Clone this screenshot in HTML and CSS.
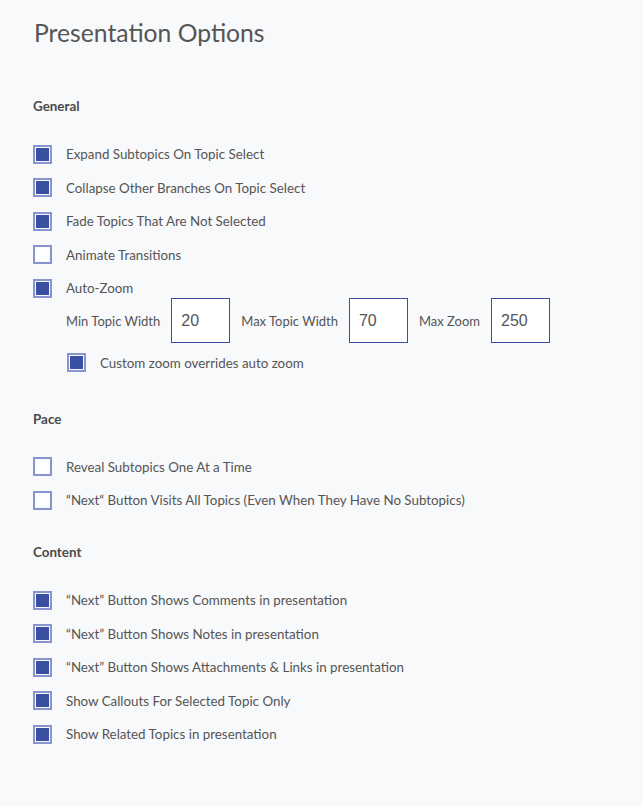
FILE: index.html
```html
<!DOCTYPE html>
<html lang="en">
<head>
    <meta charset="UTF-8">
    <meta name="viewport" content="width=device-width, initial-scale=1.0">
    <title>Presentation Options</title>
    <link rel="stylesheet" href="styles.css">
</head>
<body>
    <div class="page">
        <h1>Presentation Options</h1>

        <div class="section section-general">
            <h4>General</h4>
            <div class="options">
                <label class="option"><input type="checkbox" checked><span>Expand Subtopics On Topic Select</span></label>
                <label class="option"><input type="checkbox" checked><span>Collapse Other Branches On Topic Select</span></label>
                <label class="option"><input type="checkbox" checked><span>Fade Topics That Are Not Selected</span></label>
                <label class="option"><input type="checkbox"><span>Animate Transitions</span></label>
                <div class="option-group">
                    <label class="option"><input type="checkbox" checked><span>Auto-Zoom</span></label>
                    <div class="zoom-settings">
                        <span>Min Topic Width</span>
                        <input type="text" class="num" value="20">
                        <span>Max Topic Width</span>
                        <input type="text" class="num" value="70">
                        <span>Max Zoom</span>
                        <input type="text" class="num" value="250">
                    </div>
                    <label class="option sub"><input type="checkbox" checked><span>Custom zoom overrides auto zoom</span></label>
                </div>
            </div>
        </div>

        <div class="section section-pace">
            <h4>Pace</h4>
            <div class="options">
                <label class="option"><input type="checkbox"><span>Reveal Subtopics One At a Time</span></label>
                <label class="option"><input type="checkbox"><span>“Next“ Button Visits All Topics (Even When They Have No Subtopics)</span></label>
            </div>
        </div>

        <div class="section">
            <h4>Content</h4>
            <div class="options">
                <label class="option"><input type="checkbox" checked><span>“Next” Button Shows Comments in presentation</span></label>
                <label class="option"><input type="checkbox" checked><span>“Next” Button Shows Notes in presentation</span></label>
                <label class="option"><input type="checkbox" checked><span>“Next” Button Shows Attachments &amp; Links in presentation</span></label>
                <label class="option"><input type="checkbox" checked><span>Show Callouts For Selected Topic Only</span></label>
                <label class="option"><input type="checkbox" checked><span>Show Related Topics in presentation</span></label>
            </div>
        </div>
    </div>
</body>
</html>
```

FILE: styles.css
```css
html, body {
    margin: 0;
    padding: 0;
    background-color: #f8f9fb;
}
body {
    font-family: Lato, "Open Sans", sans-serif;
    color: #555;
    font-size: 13px;
}
.page {
    padding: 18px 33px 40px 33px;
}
h1 {
    font-size: 24.7px;
    font-weight: 400;
    line-height: 30px;
    margin: 0 0 0 1px;
    color: #555;
}
h4 {
    font-size: 13.4px;
    font-weight: 700;
    line-height: 20px;
    margin: 0 0 28.5px 0;
    color: #4a4a4a;
}
.section-general {
    margin-top: 48px;
}
.section {
    margin-bottom: 36.5px;
}
.section-pace {
    margin-bottom: 32.5px;
}
.options {
    display: flex;
    flex-direction: column;
    gap: 14.5px;
}
.option {
    display: flex;
    align-items: center;
    height: 19px;
    gap: 14px;
    font-size: 13.35px;
    cursor: pointer;
}
.option input[type="checkbox"] {
    appearance: none;
    -webkit-appearance: none;
    box-sizing: border-box;
    width: 19px;
    height: 19px;
    margin: 0;
    border: 2px solid #8893d0;
    padding: 1px;
    background-color: #fff;
    background-clip: content-box;
}
.option input[type="checkbox"]:checked {
    background-color: #3b4fa1;
}
.option.sub {
    margin: 10px 0 0 34px;
}
.zoom-settings {
    display: flex;
    align-items: center;
    gap: 11px;
    margin: 0.5px 0 0 33px;
}
.num {
    box-sizing: border-box;
    width: 59px;
    height: 45px;
    border: 1px solid #3b4fa1;
    background-color: #fff;
    padding: 0 0 0 9px;
    font-family: "Liberation Sans", Arial, sans-serif;
    font-size: 16px;
    color: #555;
    outline: none;
}
```
